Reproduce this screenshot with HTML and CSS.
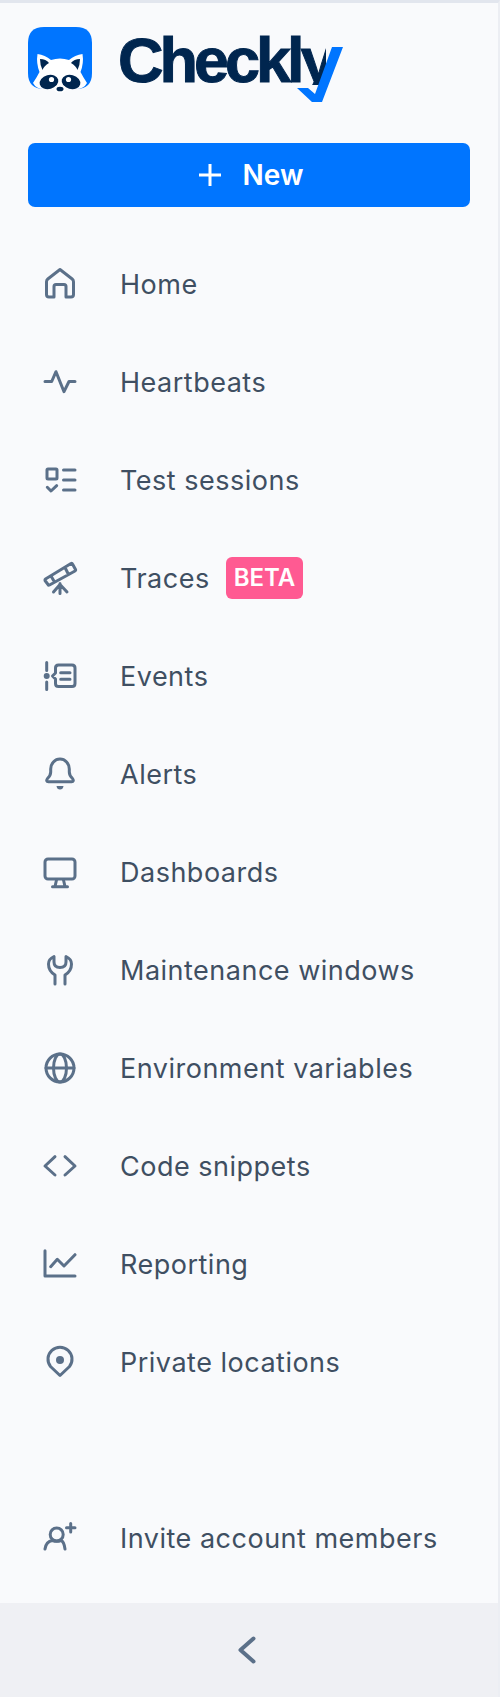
FILE: index.html
```html
<!DOCTYPE html>
<html lang="en">
<head>
    <meta charset="UTF-8">
    <title>Checkly</title>
    <link rel="stylesheet" href="styles.css">
</head>
<body>
    <aside class="sidebar">
        <div class="brand">
            <svg class="brand-mark" viewBox="0 0 64 66" width="64" height="66">
                <path class="mark-bg" d="M16 0H48Q64 0 64 16V46Q64 62 48 62H16Q0 62 0 46V16Q0 0 16 0Z"/>
                <path class="mark-white" d="M5 56Q9 50 11.5 45Q8 36 9.5 27Q17 28 23 33Q32 30 41 33Q47 28 54.5 27Q56 36 52.5 45Q55 50 59 56Q56 62 48 62H16Q8 62 5 56Z"/>
                <path class="mark-dark" d="M12 32Q18 32 21 36Q16 39 14.5 43Q12 38 12 32ZM52 32Q46 32 43 36Q48 39 49.5 43Q52 38 52 32Z"/>
                <ellipse class="mark-dark" cx="21" cy="55" rx="9.5" ry="7" transform="rotate(-15 21 55)"/>
                <ellipse class="mark-dark" cx="43" cy="55" rx="9.5" ry="7" transform="rotate(15 43 55)"/>
                <circle class="mark-white" cx="23.5" cy="52.5" r="2.6"/>
                <circle class="mark-white" cx="40.5" cy="52.5" r="2.6"/>
                <ellipse class="mark-white" cx="32" cy="62" rx="6" ry="4"/>
                <ellipse class="mark-dark" cx="32" cy="62" rx="3.5" ry="2.3"/>
            </svg>
            <div class="wordmark">
                <span class="wordmark-text">Checkly</span>
                <svg class="wordmark-check" viewBox="0 0 46 55" width="46" height="55">
                    <path d="M35 0H46L25 55H15L0 41H11L18 47Z"/>
                </svg>
            </div>
        </div>

        <button class="new-btn">
            <svg class="plus" viewBox="0 0 24 24" width="24" height="24"><path d="M12 1V23M1 12H23"/></svg>
            <span>New</span>
        </button>

        <ul class="nav">
            <li class="nav-item">
                <svg class="icon" viewBox="0 0 44 44"><path d="M22 7.5L9.8 17Q8.5 18 8.5 19.8V32.5Q8.5 35 11 35H16V24.5Q16 22.5 18 22.5H26Q28 22.5 28 24.5V35H33Q35.5 35 35.5 32.5V19.8Q35.5 18 34.2 17Z"/></svg>
                <span>Home</span>
            </li>
            <li class="nav-item">
                <svg class="icon" viewBox="0 0 44 44"><path d="M7 21.5H13.7L18 11.7L26 31.7L31 21.5H37"/></svg>
                <span>Heartbeats</span>
            </li>
            <li class="nav-item">
                <svg class="icon" viewBox="0 0 44 44"><rect x="9" y="11" width="10" height="10" rx="1"/><path d="M25.5 12H37M25.5 22H37M25.5 32H37M9.3 29.3L13 33L18.7 27.7"/></svg>
                <span>Test sessions</span>
            </li>
            <li class="nav-item">
                <svg class="icon" viewBox="0 0 44 44"><path d="M7.5 23L33 7.5Q34 7 34.5 8L37.5 13.5Q38 14.5 37 15L11.5 29Q10.5 29.5 10 28.5L7 24.5Q6.8 23.5 7.5 23ZM27 11.5L30.5 18.5M13 20L16.5 26M22 27.5V37.5M15.5 36L22 28.5L29 36"/></svg>
                <span>Traces</span>
                <span class="badge">BETA</span>
            </li>
            <li class="nav-item">
                <svg class="icon" viewBox="0 0 44 44"><path d="M8.7 8.5V16.5M8.7 28V35.5M22.7 18.7H32M22.7 25.3H32M17.5 14Q17.5 11 20.5 11H34Q37 11 37 14V29.5Q37 32.5 34 32.5H20.5Q17.5 32.5 17.5 29.5V25L14.5 22L17.5 19Z"/><circle class="dot" cx="8.7" cy="22" r="3"/></svg>
                <span>Events</span>
            </li>
            <li class="nav-item">
                <svg class="icon" viewBox="0 0 44 44"><path d="M12.7 17A9.3 10 0 0 1 31.3 17V20Q31.3 23.5 34.5 26.5Q36.5 29.5 33.5 29.7H10.5Q7.5 29.5 9.5 26.5Q12.7 23.5 12.7 20Z"/><path class="dot" d="M18.5 34H25.5Q25 37.5 22 37.5Q19 37.5 18.5 34Z"/></svg>
                <span>Alerts</span>
            </li>
            <li class="nav-item">
                <svg class="icon" viewBox="0 0 44 44"><rect x="7" y="9" width="30" height="20" rx="3"/><path d="M18.5 30L17 36.5M25.5 30L27 36.5M14.5 36.7H29.5"/></svg>
                <span>Dashboards</span>
            </li>
            <li class="nav-item">
                <svg class="icon" viewBox="0 0 44 44"><path d="M17 36V27Q10.5 23 10.5 16Q10.5 11 16 8.5V14Q16 19.5 22 19.5Q28 19.5 28 14V8.5Q33.5 11 33.5 16Q33.5 23 27 27V36"/></svg>
                <span>Maintenance windows</span>
            </li>
            <li class="nav-item">
                <svg class="icon" viewBox="0 0 44 44"><circle cx="22" cy="22" r="14"/><ellipse cx="22" cy="22" rx="6.5" ry="14"/><path d="M8 22H36"/></svg>
                <span>Environment variables</span>
            </li>
            <li class="nav-item">
                <svg class="icon" viewBox="0 0 44 44"><path d="M17 12.7L7 22L17 31M27 12.7L37 22L27 31"/></svg>
                <span>Code snippets</span>
            </li>
            <li class="nav-item">
                <svg class="icon" viewBox="0 0 44 44"><path d="M7 8.7V34H37M12.7 24.7L19.3 17.3L26 24L37 12.7"/></svg>
                <span>Reporting</span>
            </li>
            <li class="nav-item">
                <svg class="icon" viewBox="0 0 44 44"><path d="M22 35.5L12.5 26.5A12 12 0 1 1 31.5 26.5Z"/><circle class="dot" cx="22" cy="20" r="4"/></svg>
                <span>Private locations</span>
            </li>
        </ul>

        <div class="invite">
            <div class="nav-item">
                <svg class="icon" viewBox="0 0 44 44"><circle cx="18.7" cy="18.5" r="6.5"/><path d="M7 33Q8 25.5 14.5 24.5M27 33Q26 25.5 23 24.5M14.5 24.5Q18.7 26 23 24.5M32.7 7.5V16M28.5 11.7H37"/></svg>
                <span>Invite account members</span>
            </div>
        </div>

        <div class="collapse">
            <svg class="icon" viewBox="0 0 44 44"><path d="M28.5 10.5L15.5 22L28.5 33.5"/></svg>
        </div>
    </aside>
</body>
</html>
```

FILE: styles.css
```css
body {
    margin: 0;
    font-family: 'Inter', 'Liberation Sans', sans-serif;
}

.sidebar {
    box-sizing: border-box;
    width: 500px;
    height: 1697px;
    display: flex;
    flex-direction: column;
    background-color: #f9fafc;
    border-top: 3px solid #e2e6ee;
    border-right: 2px solid #eceef3;
}

.brand {
    display: flex;
    align-items: flex-start;
    gap: 26px;
    padding: 24px 28px 0;
    height: 116px;
    box-sizing: border-box;
}

.mark-bg {
    fill: #0075ff;
}

.mark-white {
    fill: #ffffff;
}

.mark-dark {
    fill: #00264f;
}

.brand-mark {
    flex: none;
}

.wordmark {
    position: relative;
    width: 240px;
    height: 80px;
}

/* cut the y at the baseline, the check mark finishes the letter */
.wordmark-text {
    display: block;
    margin-top: 2px;
    clip-path: inset(0 32px 6px 0);
    font-family: 'Liberation Sans', sans-serif;
    font-weight: 700;
    font-size: 63px;
    line-height: 62px;
    letter-spacing: -4px;
    color: #00264f;
    -webkit-text-stroke: 1px #00264f;
}

.wordmark-check {
    position: absolute;
    left: 179px;
    top: 20px;
    fill: #0075ff;
}

.new-btn {
    display: flex;
    align-items: center;
    justify-content: center;
    gap: 21px;
    flex: none;
    margin: 24px 28px 28px;
    width: 442px;
    height: 64px;
    padding: 0 0 0 3px;
    border: 0;
    border-radius: 7px;
    background-color: #0075ff;
    color: #ffffff;
    font-family: inherit;
    font-size: 28px;
    font-weight: 600;
}

.plus {
    fill: none;
    stroke: #ffffff;
    stroke-width: 3;
}

.nav {
    list-style: none;
    margin: 0;
    padding: 0;
}

.nav-item {
    display: flex;
    align-items: center;
    height: 98px;
    padding-left: 38px;
    font-size: 27px;
    letter-spacing: 0.5px;
    color: #3f4f62;
}

.icon {
    flex: none;
    width: 44px;
    height: 44px;
    margin-right: 38px;
    fill: none;
    stroke: #5b7089;
    stroke-width: 3;
    stroke-linecap: round;
    stroke-linejoin: round;
}

.icon .dot {
    fill: #5b7089;
    stroke: none;
}

.badge {
    margin-left: 16px;
    padding: 0 8px;
    height: 42px;
    line-height: 42px;
    border-radius: 6px;
    background-color: #ff5a92;
    color: #ffffff;
    font-size: 24px;
    font-weight: 600;
    letter-spacing: 0;
}

.invite {
    margin-top: auto;
    height: 114px;
}

.collapse {
    display: flex;
    align-items: center;
    justify-content: center;
    flex: none;
    height: 94px;
    background-color: #eff0f4;
}

.collapse .icon {
    margin-right: 0;
    stroke-width: 4;
    transform: translateX(-2px);
}
```
